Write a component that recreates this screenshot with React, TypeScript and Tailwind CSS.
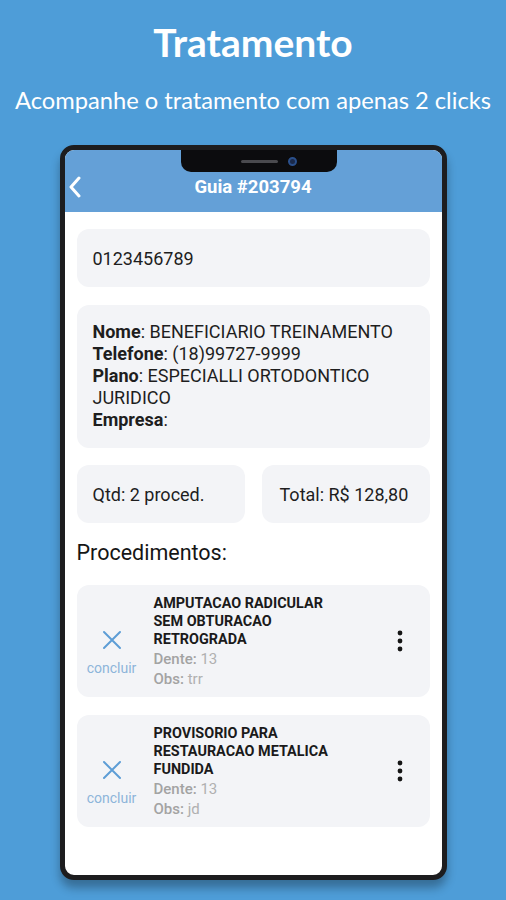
import React from 'react';

interface Procedimento {
  id: number;
  nome: string;
  dente: string;
  obs: string;
}

const procedimentos: Procedimento[] = [
  { id: 1, nome: 'AMPUTACAO RADICULAR SEM OBTURACAO RETROGRADA', dente: '13', obs: 'trr' },
  { id: 2, nome: 'PROVISORIO PARA RESTAURACAO METALICA FUNDIDA', dente: '13', obs: 'jd' },
];

function CloseIcon() {
  return (
    <svg width="20" height="20" viewBox="0 0 20 20" fill="none">
      <path d="M2 2 L18 18 M18 2 L2 18" stroke="#5d9dd6" strokeWidth="2" strokeLinecap="round" />
    </svg>
  );
}

function Kebab() {
  return (
    <svg width="6" height="22" viewBox="0 0 6 22">
      <circle cx="3" cy="3" r="2.4" fill="#151515" />
      <circle cx="3" cy="11" r="2.4" fill="#151515" />
      <circle cx="3" cy="19" r="2.4" fill="#151515" />
    </svg>
  );
}

export default function App() {
  return (
    <div className="w-[506px] h-[900px] overflow-hidden bg-[#4e9dd8] flex flex-col items-center font-['Roboto',sans-serif]">
      <h1 className="mt-[20px] text-[39px] leading-[44px] font-bold text-white font-['Lato',sans-serif]">
        Tratamento
      </h1>
      <p className="mt-[21px] text-[23.7px] leading-[30px] text-white font-['Lato',sans-serif] whitespace-nowrap">
        Acompanhe o tratamento com apenas 2 clicks
      </p>

      {/* phone */}
      <div className="mt-[30px] w-[387px] h-[735px] shrink-0 rounded-[14px] border-[5px] border-[#1d1d1f] bg-white overflow-hidden flex flex-col shadow-[0_8px_10px_rgba(0,0,0,0.3)]">
        <div className="relative h-[62px] shrink-0 bg-[#64a0d7] pt-[26px]">
          <div className="absolute left-[116px] top-0 w-[156px] h-[22px] bg-[#0c0c0e] rounded-b-[10px] flex items-center justify-end pr-[40px] gap-[10px]">
            <div className="w-[37px] h-[3px] rounded-full bg-[#4a4a4e]" />
            <div className="w-[9px] h-[9px] rounded-full bg-[#1b2a4a] border-[2px] border-[#2a4f8a]" />
          </div>
          <div className="grid grid-cols-[40px_1fr_40px] h-[22px] items-center">
            <svg width="16" height="22" viewBox="0 0 16 22" className="ml-[2px]">
              <path d="M12 2 L4 11 L12 20" stroke="white" strokeWidth="3" fill="none" strokeLinecap="round" strokeLinejoin="round" />
            </svg>
            <div className="text-center text-white font-bold text-[18.5px] leading-[22px]">Guia #203794</div>
            <div />
          </div>
        </div>

        <div className="flex flex-col px-3 pt-[17px] text-[#1e1e1e]">
          <div className="h-[58px] rounded-[12px] bg-[#f3f4f7] flex items-center px-4 text-[18px]">
            0123456789
          </div>

          <div className="mt-[18px] rounded-[12px] bg-[#f3f4f7] px-4 pt-[16px] pb-[17px] text-[18px] leading-[22px]">
            <div><span className="font-bold">Nome</span>: BENEFICIARIO TREINAMENTO</div>
            <div><span className="font-bold">Telefone</span>: (18)99727-9999</div>
            <div><span className="font-bold">Plano</span>: ESPECIALLI ORTODONTICO</div>
            <div>JURIDICO</div>
            <div><span className="font-bold">Empresa</span>:</div>
          </div>

          <div className="mt-[17px] grid grid-cols-2 gap-[17px] text-[18px]">
            <div className="h-[58px] rounded-[12px] bg-[#f3f4f7] flex items-center px-4">Qtd: 2 proced.</div>
            <div className="h-[58px] rounded-[12px] bg-[#f3f4f7] flex items-center px-[18px]">Total: R$ 128,80</div>
          </div>

          <h2 className="mt-[18px] text-[21.5px] leading-[24px] text-[#151515]">Procedimentos:</h2>

          <div className="mt-[20px] flex flex-col gap-[18px]">
            {procedimentos.map((p) => (
              <div key={p.id} className="h-[112px] rounded-[12px] bg-[#f3f4f7] flex">
                <div className="w-[70px] shrink-0 flex flex-col items-center pt-[45px]">
                  <CloseIcon />
                  <span className="mt-[10px] text-[14px] leading-[16px] text-[#8db5da]">concluir</span>
                </div>
                <div className="w-[192px] ml-[7px] pt-[10px]">
                  <div className="text-[14.4px] leading-[18px] font-bold text-[#1a1a1a]">{p.nome}</div>
                  <div className="text-[15px] leading-[20px] text-[#b0b0b0]">
                    <span className="font-medium text-[#a3a3a3]">Dente:</span> {p.dente}
                  </div>
                  <div className="text-[15px] leading-[20px] text-[#b0b0b0]">
                    <span className="font-medium text-[#a3a3a3]">Obs:</span> {p.obs}
                  </div>
                </div>
                <div className="flex-1 flex items-center justify-end pr-[27px]">
                  <Kebab />
                </div>
              </div>
            ))}
          </div>
        </div>
      </div>
    </div>
  );
}
